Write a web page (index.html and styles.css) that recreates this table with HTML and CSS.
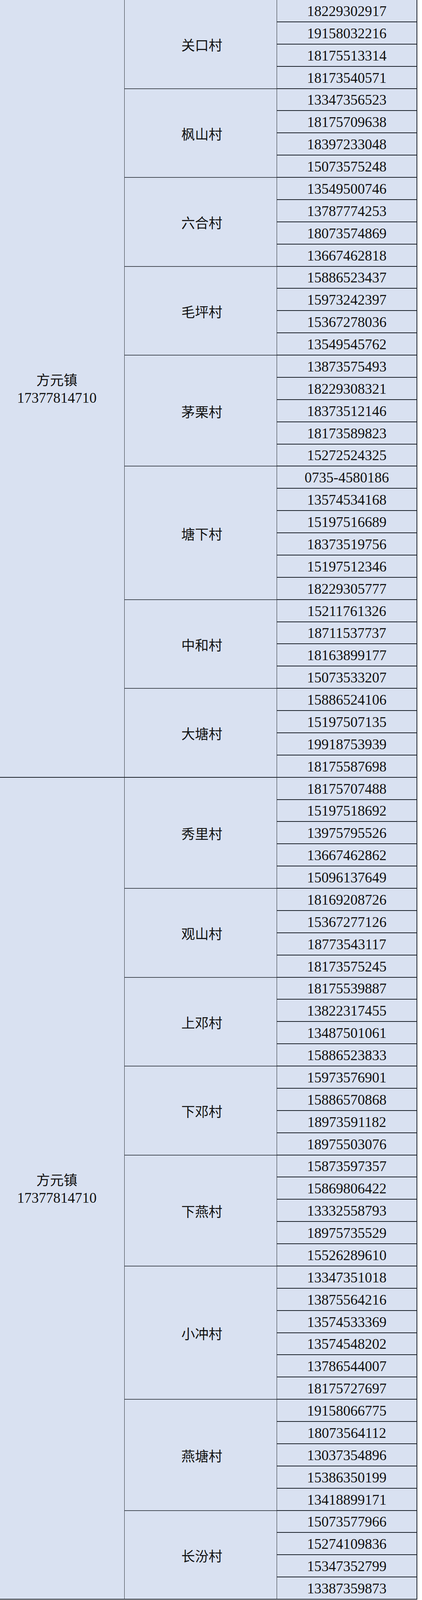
FILE: index.html
```html
<!DOCTYPE html>
<html lang="zh-CN">
<head>
<meta charset="utf-8">
<title>方元镇</title>
<link rel="stylesheet" href="styles.css">
</head>
<body>
<div class="sheet">
  <div class="group">
    <div class="town"><span class="zh">方元镇</span><span class="num">17377814710</span></div>
    <div class="villages">
      <div class="village"><div class="vname">关口村</div><div class="phones">
        <div class="phone">18229302917</div><div class="phone">19158032216</div><div class="phone">18175513314</div><div class="phone">18173540571</div>
      </div></div>
      <div class="village"><div class="vname">枫山村</div><div class="phones">
        <div class="phone">13347356523</div><div class="phone">18175709638</div><div class="phone">18397233048</div><div class="phone">15073575248</div>
      </div></div>
      <div class="village"><div class="vname">六合村</div><div class="phones">
        <div class="phone">13549500746</div><div class="phone">13787774253</div><div class="phone">18073574869</div><div class="phone">13667462818</div>
      </div></div>
      <div class="village"><div class="vname">毛坪村</div><div class="phones">
        <div class="phone">15886523437</div><div class="phone">15973242397</div><div class="phone">15367278036</div><div class="phone">13549545762</div>
      </div></div>
      <div class="village"><div class="vname">茅栗村</div><div class="phones">
        <div class="phone">13873575493</div><div class="phone">18229308321</div><div class="phone">18373512146</div><div class="phone">18173589823</div><div class="phone">15272524325</div>
      </div></div>
      <div class="village"><div class="vname">塘下村</div><div class="phones">
        <div class="phone">0735-4580186</div><div class="phone">13574534168</div><div class="phone">15197516689</div><div class="phone">18373519756</div><div class="phone">15197512346</div><div class="phone">18229305777</div>
      </div></div>
      <div class="village"><div class="vname">中和村</div><div class="phones">
        <div class="phone">15211761326</div><div class="phone">18711537737</div><div class="phone">18163899177</div><div class="phone">15073533207</div>
      </div></div>
      <div class="village"><div class="vname">大塘村</div><div class="phones">
        <div class="phone">15886524106</div><div class="phone">15197507135</div><div class="phone">19918753939</div><div class="phone">18175587698</div>
      </div></div>
    </div>
  </div>
  <div class="group">
    <div class="town"><span class="zh">方元镇</span><span class="num">17377814710</span></div>
    <div class="villages">
      <div class="village"><div class="vname">秀里村</div><div class="phones">
        <div class="phone">18175707488</div><div class="phone">15197518692</div><div class="phone">13975795526</div><div class="phone">13667462862</div><div class="phone">15096137649</div>
      </div></div>
      <div class="village"><div class="vname">观山村</div><div class="phones">
        <div class="phone">18169208726</div><div class="phone">15367277126</div><div class="phone">18773543117</div><div class="phone">18173575245</div>
      </div></div>
      <div class="village"><div class="vname">上邓村</div><div class="phones">
        <div class="phone">18175539887</div><div class="phone">13822317455</div><div class="phone">13487501061</div><div class="phone">15886523833</div>
      </div></div>
      <div class="village"><div class="vname">下邓村</div><div class="phones">
        <div class="phone">15973576901</div><div class="phone">15886570868</div><div class="phone">18973591182</div><div class="phone">18975503076</div>
      </div></div>
      <div class="village"><div class="vname">下燕村</div><div class="phones">
        <div class="phone">15873597357</div><div class="phone">15869806422</div><div class="phone">13332558793</div><div class="phone">18975735529</div><div class="phone">15526289610</div>
      </div></div>
      <div class="village"><div class="vname">小冲村</div><div class="phones">
        <div class="phone">13347351018</div><div class="phone">13875564216</div><div class="phone">13574533369</div><div class="phone">13574548202</div><div class="phone">13786544007</div><div class="phone">18175727697</div>
      </div></div>
      <div class="village"><div class="vname">燕塘村</div><div class="phones">
        <div class="phone">19158066775</div><div class="phone">18073564112</div><div class="phone">13037354896</div><div class="phone">15386350199</div><div class="phone">13418899171</div>
      </div></div>
      <div class="village"><div class="vname">长汾村</div><div class="phones">
        <div class="phone">15073577966</div><div class="phone">15274109836</div><div class="phone">15347352799</div><div class="phone">13387359873</div>
      </div></div>
    </div>
  </div>
</div>
</body>
</html>
```
FILE: styles.css
```css
html, body {
  margin: 0;
  padding: 0;
  background: #ffffff;
}

.sheet {
  width: 1068px;
  background: #d9e1f1;
  border-right: 2px solid #1c222b;
  box-sizing: border-box;
  color: #111111;
  font-family: "Liberation Serif", "Noto Sans CJK SC", serif;
  line-height: 1;
}

.group {
  display: flex;
  box-shadow: inset 0 -2px 0 #1c222b;
}

.town {
  width: 319px;
  flex: none;
  box-sizing: border-box;
  padding-right: 27px;
  border-right: 1px solid #2a2f36;
  display: flex;
  flex-direction: column;
  align-items: center;
  justify-content: center;
  gap: 12px;
}

.zh {
  font-family: "Noto Sans CJK SC", sans-serif;
  font-size: 35px;
  font-weight: 400;
  line-height: 1;
}

.num {
  font-size: 37px;
  line-height: 1;
}

.villages {
  flex: 1;
  display: flex;
  flex-direction: column;
}

.village {
  display: flex;
  box-shadow: inset 0 -1.5px 0 #1c222b;
}

.vname {
  width: 390px;
  flex: none;
  border-right: 1px solid #2a2f36;
  display: flex;
  align-items: center;
  justify-content: center;
  font-family: "Noto Sans CJK SC", sans-serif;
  font-size: 35px;
  font-weight: 400;
  line-height: 1;
  padding-left: 6px;
  box-sizing: border-box;
}

.phones {
  flex: 1;
  display: flex;
  flex-direction: column;
}

.phone {
  height: 56.88px;
  flex: none;
  display: flex;
  align-items: center;
  justify-content: center;
  font-size: 37px;
  line-height: 1;
  box-shadow: inset 0 -2px 0 #1c222b;
}
```
